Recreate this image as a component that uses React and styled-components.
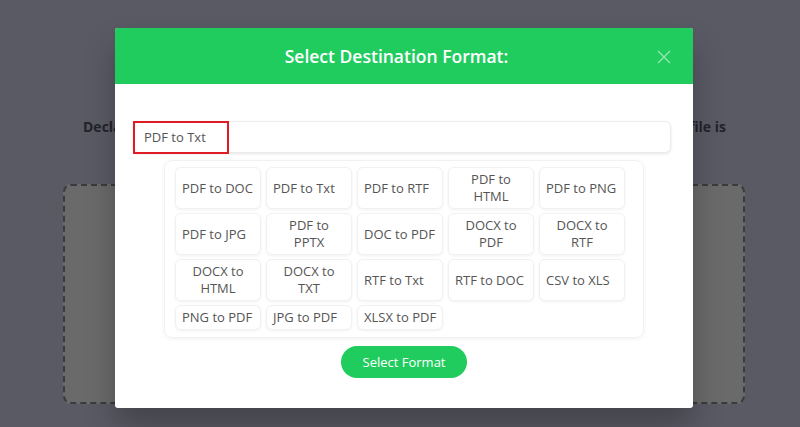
import React from 'react';
import styled, {createGlobalStyle} from 'styled-components';

const GlobalStyle = createGlobalStyle`
    html, body {
        margin: 0;
        padding: 0;
    }
    body {
        font-family: "Open Sans", "Noto Sans", sans-serif;
        background: #5a5a65;
    }
`;

const FORMATS = [
    'PDF to DOC', 'PDF to Txt', 'PDF to RTF', 'PDF to\nHTML', 'PDF to PNG',
    'PDF to JPG', 'PDF to\nPPTX', 'DOC to PDF', 'DOCX to\nPDF', 'DOCX to\nRTF',
    'DOCX to\nHTML', 'DOCX to\nTXT', 'RTF to Txt', 'RTF to DOC', 'CSV to XLS',
    'PNG to PDF', 'JPG to PDF', 'XLSX to PDF'
];

const Page = styled.div`
    position: relative;
    width: 800px;
    height: 427px;
    overflow: hidden;
    background: #5a5a65;
    padding-top: 118px;
    box-sizing: border-box;
`;

const Intro = styled.p`
    margin: 0 0 0 83px;
    width: 643px;
    display: flex;
    justify-content: space-between;
    font-size: 14px;
    font-weight: 700;
    line-height: 18px;
    color: #23232b;
    white-space: nowrap;
`;

const DropZone = styled.div`
    margin: 48px 0 0 63px;
    width: 682px;
    height: 220px;
    box-sizing: border-box;
    border: 2px dashed #3b3b3f;
    border-radius: 8px;
    background: #6a6a6a;
`;

const Modal = styled.div`
    position: absolute;
    left: 115px;
    top: 28px;
    width: 578px;
    height: 380px;
    background: #fff;
    border-radius: 3px;
    box-shadow: 0 18px 30px rgba(0, 0, 0, 0.25);
    display: flex;
    flex-direction: column;
    overflow: hidden;
`;

const Header = styled.div`
    position: relative;
    height: 56px;
    background: #21cc5f;
    display: flex;
    align-items: center;
    justify-content: center;
`;

const Title = styled.h2`
    margin: 0 0 0 -15px;
    font-size: 17.5px;
    font-weight: 600;
    color: #fff;
`;

const Close = styled.button`
    position: absolute;
    right: 22px;
    top: 22px;
    width: 14px;
    height: 14px;
    padding: 0;
    border: 0;
    background: transparent;
    display: flex;
    cursor: pointer;
`;

const Body = styled.div`
    display: flex;
    flex-direction: column;
    align-items: center;
    padding: 37px 22px 30px 18px;
`;

const SearchWrap = styled.div`
    position: relative;
    align-self: stretch;
`;

const Search = styled.input`
    display: block;
    width: 100%;
    height: 32px;
    box-sizing: border-box;
    border: 1px solid #ececec;
    border-radius: 6px;
    box-shadow: 0 1px 3px rgba(0, 0, 0, 0.1);
    padding: 0 10px;
    font-family: inherit;
    font-size: 13px;
    color: #555;
    outline: none;
`;

const Highlight = styled.span`
    position: absolute;
    left: 0;
    top: 0;
    width: 96px;
    height: 33px;
    box-sizing: border-box;
    border: 2px solid #e01b24;
    pointer-events: none;
`;

const Grid = styled.div`
    margin: 7px 0 0 4px;
    width: 480px;
    box-sizing: border-box;
    display: grid;
    grid-template-columns: repeat(5, 86px);
    gap: 4px 5px;
    padding: 6px 20px 7px 10px;
    border: 1px solid #f1f1f1;
    border-radius: 8px;
    box-shadow: 0 1px 4px rgba(0, 0, 0, 0.06);
`;

const Option = styled.button`
    display: flex;
    align-items: center;
    justify-content: ${props => props.$stacked ? 'center' : 'flex-start'};
    padding: 3px 6px;
    border: 1px solid #f1f1f1;
    border-radius: 6px;
    background: #fff;
    box-shadow: 0 1px 3px rgba(0, 0, 0, 0.06);
    font-family: inherit;
    font-size: 13px;
    line-height: 17px;
    color: #555;
    white-space: pre;
    text-align: center;
    cursor: pointer;
`;

const Submit = styled.button`
    margin: 8px 0 0 4px;
    width: 126px;
    height: 32px;
    border: 0;
    border-radius: 16px;
    background: #21cc5f;
    color: #fff;
    font-family: inherit;
    font-size: 13px;
    font-weight: 500;
    cursor: pointer;
`;

export default function App()
{
    return (
        <>
            <GlobalStyle/>
            <Page>
                <Intro>
                    <span>Declare the document you want converted</span>
                    <span>choose which format the file is</span>
                </Intro>
                <DropZone/>
                <Modal>
                    <Header>
                        <Title>Select Destination Format:</Title>
                        <Close aria-label="Close">
                            <svg width="14" height="14" viewBox="0 0 14 14">
                                <path d="M1 1 L13 13 M13 1 L1 13" stroke="rgba(255,255,255,0.55)" strokeWidth="1.2"/>
                            </svg>
                        </Close>
                    </Header>
                    <Body>
                        <SearchWrap>
                            <Search type="text" defaultValue="PDF to Txt"/>
                            <Highlight/>
                        </SearchWrap>
                        <Grid>
                            {FORMATS.map(label => (
                                <Option key={label} type="button" $stacked={label.includes('\n')}>
                                    <span>{label}</span>
                                </Option>
                            ))}
                        </Grid>
                        <Submit type="button">Select Format</Submit>
                    </Body>
                </Modal>
            </Page>
        </>
    );
}
